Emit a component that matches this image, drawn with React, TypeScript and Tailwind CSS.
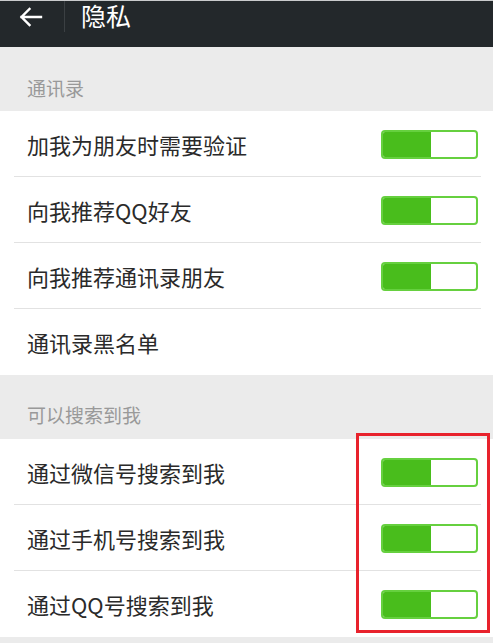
const sections = [
  {
    title: "通讯录",
    rows: [
      { label: "加我为朋友时需要验证", on: true },
      { label: "向我推荐QQ好友", on: true },
      { label: "向我推荐通讯录朋友", on: true },
      { label: "通讯录黑名单", on: false },
    ],
  },
  {
    title: "可以搜索到我",
    rows: [
      { label: "通过微信号搜索到我", on: true },
      { label: "通过手机号搜索到我", on: true },
      { label: "通过QQ号搜索到我", on: true },
    ],
  },
];

function Toggle() {
  return (
    <div className="flex h-[29px] w-[97px] overflow-hidden rounded-[4px] border-2 border-[#66d03f] bg-white">
      <div className="h-full w-[48px] bg-[#49bd1c]" />
    </div>
  );
}

export default function App() {
  return (
    <div
      className="relative h-[643px] w-[493px] overflow-hidden bg-[#ebebeb]"
      style={{ fontFamily: '"Noto Sans CJK SC", "Noto Sans", sans-serif' }}
    >
      <header className="flex h-[47px] items-start border-t border-[#c9cbcc] bg-[#23282b]">
        <div className="flex h-[31px] w-[65px] items-center justify-center border-r border-[#3b4043]">
          <svg className="ml-[-2px] h-[20px] w-[24px]" viewBox="0 0 24 20" fill="none" stroke="#fff" strokeWidth={2.4} strokeLinecap="square">
            <path d="M2.5 10H22M10.5 2L2.5 10L10.5 18" />
          </svg>
        </div>
        <span className="ml-[16px] text-[25px] leading-[29px] text-white">隐私</span>
      </header>

      {sections.map((s, si) => (
        <section key={s.title}>
          <div className={`flex h-[64px] items-end px-[27px] ${si === 0 ? "pb-[11px]" : "pb-[12px]"}`}>
            <span className="text-[19px] leading-[24px] text-[#999]">{s.title}</span>
          </div>
          <div className="bg-white">
            {s.rows.map((r, i) => (
              <div key={r.label} className="relative flex h-[66px] items-center justify-between pl-[27px] pr-[15px]">
                <span className="text-[22px] leading-[28px] text-[#2a2a2a]">{r.label}</span>
                {r.on && <Toggle />}
                {i < s.rows.length - 1 && (
                  <div className="absolute bottom-0 left-[14px] right-[12px] h-px bg-[#e2e2e2]" />
                )}
              </div>
            ))}
          </div>
        </section>
      ))}

      <div className="absolute left-[356px] top-[433px] h-[200px] w-[134px] border-[3px] border-[#e8222c]" />
    </div>
  );
}
